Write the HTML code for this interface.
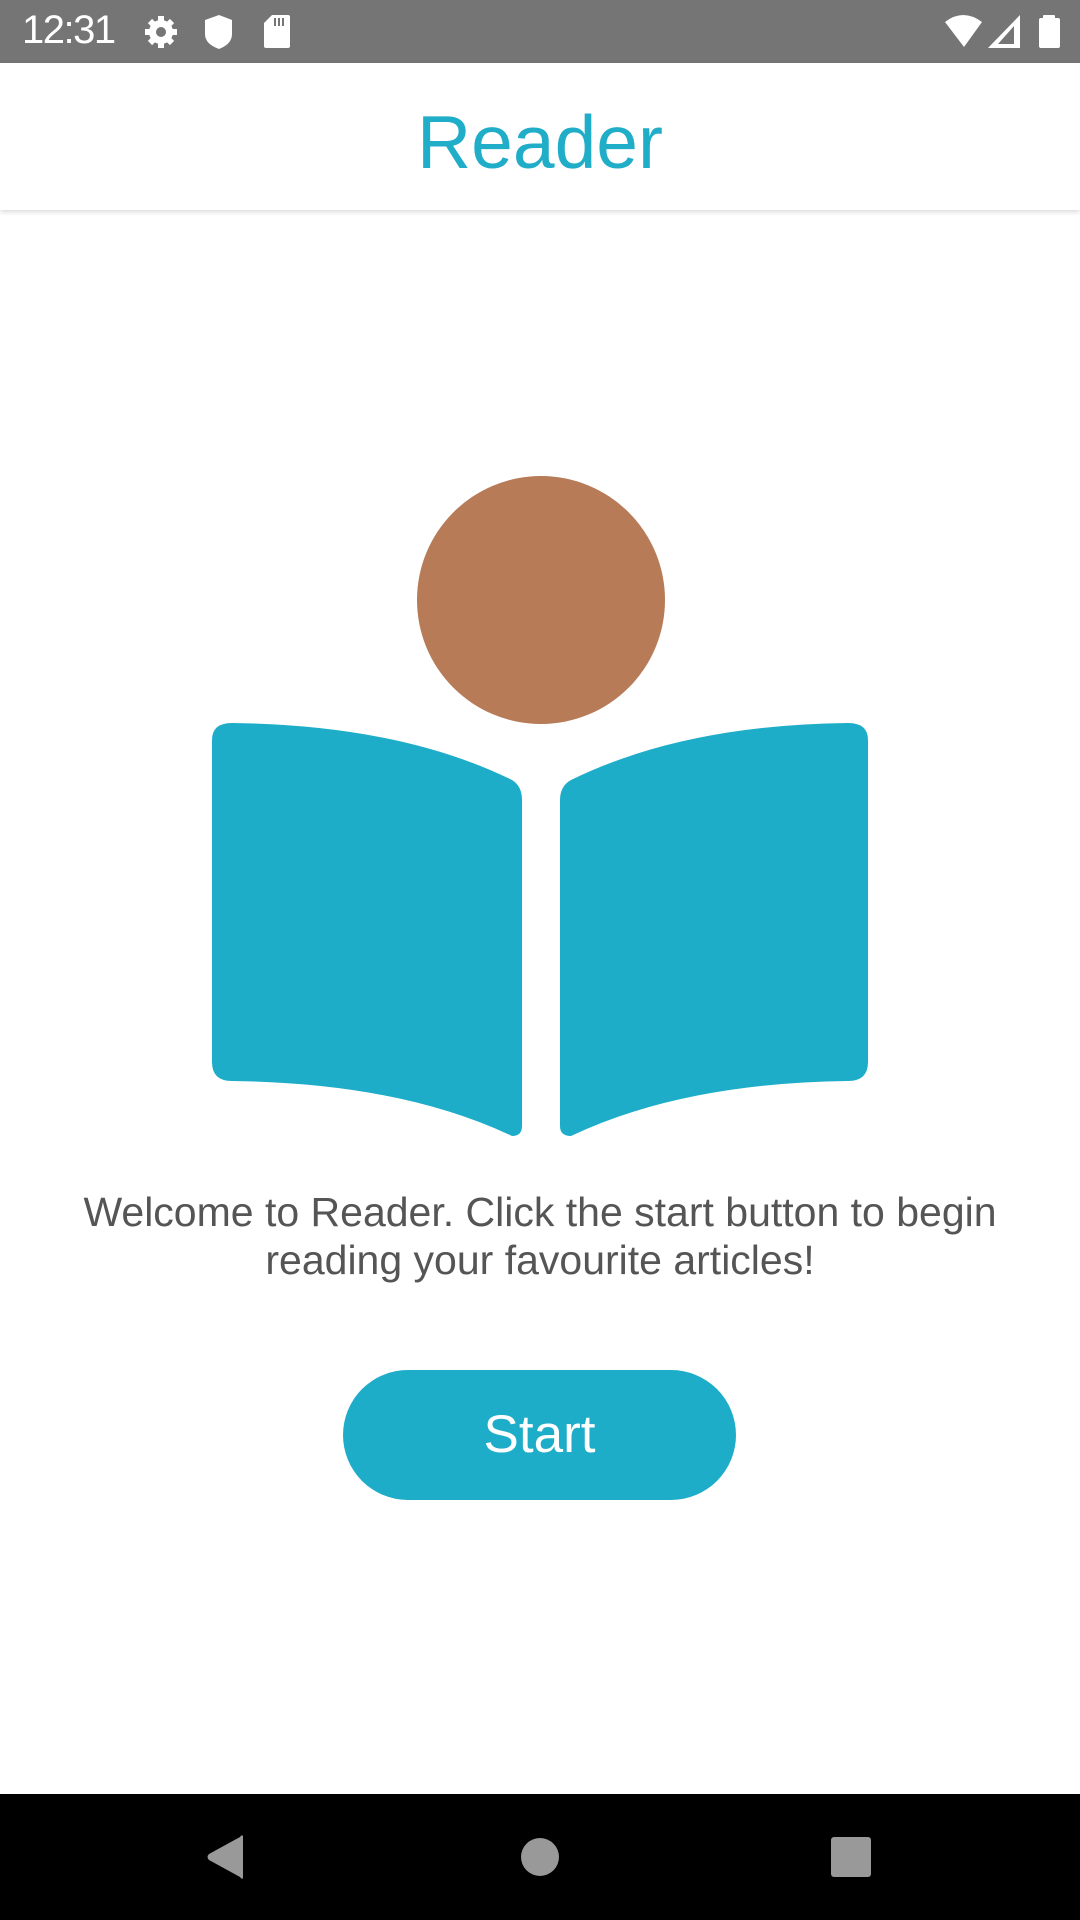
<!DOCTYPE html>
<html><head><meta charset="utf-8"><style>
html,body{margin:0;padding:0}
body{width:1080px;height:1920px;position:relative;background:#fff;overflow:hidden;font-family:"Liberation Sans",Roboto,sans-serif}
.sb{position:absolute;left:0;top:0;width:1080px;height:63px;background:#757575}
.time{position:absolute;left:22px;top:8px;color:#fff;font-size:40px;letter-spacing:-1.5px}
.appbar{position:absolute;left:0;top:63px;width:1080px;height:147px;background:#fff;box-shadow:0 2px 5px rgba(0,0,0,.15)}
.title{position:absolute;left:0;width:1080px;top:42px;text-align:center;color:#1fadc8;font-size:75px;line-height:75px}
.msg{position:absolute;left:0;width:1080px;top:1188px;text-align:center;color:#555;font-size:41px;line-height:48px}
.btn{position:absolute;left:343px;top:1370px;width:393px;height:130px;border-radius:65px;background:#1eadc9;color:#fff;font-size:53px;line-height:130px;text-align:center}
.nav{position:absolute;left:0;top:1794px;width:1080px;height:126px;background:#000}
</style></head><body>
<div class="sb">
<div class="time">12:31</div>
<svg width="1080" height="63" style="position:absolute;left:0;top:0">
 <g fill="#fff">
  <circle cx="161" cy="32" r="12"/>
  <g stroke="#fff" stroke-width="6">
   <line x1="161" y1="16" x2="161" y2="48"/><line x1="145" y1="32" x2="177" y2="32"/>
   <line x1="150" y1="21" x2="172" y2="43"/><line x1="172" y1="21" x2="150" y2="43"/>
  </g>
  <circle cx="161" cy="32" r="5" fill="#757575"/>
  <path d="M219 15 L232 20 L232 34 Q232 44 219 49 Q205 44 205 34 L205 20 Z"/>
  <path d="M272 15 L288 15 Q290 15 290 17 L290 46 Q290 48 288 48 L266 48 Q264 48 264 46 L264 23 Z"/>
  <rect x="274" y="18" width="2" height="8" fill="#757575"/><rect x="278" y="18" width="2" height="8" fill="#757575"/><rect x="282" y="18" width="2" height="8" fill="#757575"/>
  <path d="M945 22 Q963 8 982 22 L964 47 Z"/>
  <path d="M1020 15 L1020 48 L988 48 Z"/>
  <path d="M1014 26 L1014 44 L998 44 Z" fill="#757575"/>
  <rect x="1043" y="15" width="12" height="5" rx="1"/>
  <rect x="1039" y="18" width="21" height="30" rx="2"/>
 </g>
</svg>
</div>
<div class="appbar"><div class="title">Reader</div></div>
<svg width="1080" height="1200" style="position:absolute;left:0;top:0">
 <circle cx="541" cy="600" r="124" fill="#b87b57"/>
 <path d="M212 740 Q212 723 232 723 Q400 725 512 780 Q522 786 522 800 L522 1126 Q522 1136 512 1136 Q400 1083 232 1081 Q212 1081 212 1062 Z" fill="#1eadc9"/>
 <path d="M868 740 Q868 723 848 723 Q683 725 571 780 Q560 786 560 800 L560 1126 Q560 1136 571 1136 Q683 1083 848 1081 Q868 1081 868 1062 Z" fill="#1eadc9"/>
</svg>
<div class="msg">Welcome to Reader. Click the start button to begin<br>reading your favourite articles!</div>
<div class="btn">Start</div>
<div class="nav">
<svg width="1080" height="126" style="position:absolute;left:0;top:0">
 <path d="M243 42 L243 84 Q242 86 240 83 L209 66 Q206 63 209 60 L240 43 Q242 40 243 42 Z" fill="#999"/>
 <circle cx="540" cy="63" r="19" fill="#999"/>
 <rect x="831" y="43" width="40" height="40" rx="3" fill="#999"/>
</svg>
</div>
</body></html>
